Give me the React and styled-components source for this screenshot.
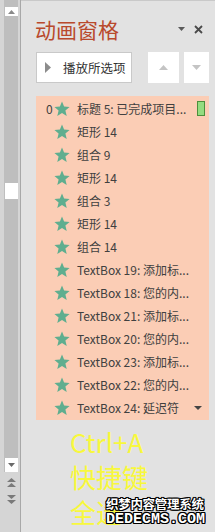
import React from "react";
import styled, { createGlobalStyle } from "styled-components";

const GlobalStyle = createGlobalStyle`
  html, body { margin: 0; padding: 0; }
  body {
    width: 215px; height: 532px; overflow: hidden;
    background: #e1e1e1;
    font-family: "Noto Sans CJK SC", "Noto Sans", sans-serif;
  }
`;

const Frame = styled.div`
  position: relative;
  display: flex;
  width: 215px;
  height: 532px;
  overflow: hidden;
`;

const ScrollCol = styled.div`
  width: 21px;
  box-sizing: border-box;
  border-right: 1px solid #a8a8a8;
  background: #d5d5d5;
  padding-left: 4px;
  display: flex;
  flex-direction: column;
`;

const Track = styled.div`
  width: 14px;
  height: 472px;
  background: #bebebe;
  display: flex;
  flex-direction: column;
  align-items: center;
`;

const ScrollBtn = styled.div`
  width: 13px;
  height: ${p => p.$h}px;
  margin-top: ${p => p.$mt || 0}px;
  background: #ffffff;
  display: flex;
  align-items: center;
  justify-content: center;
`;

const Spacer = styled.div`flex: 1;`;

const PageArrows = styled.div`
  width: 14px;
  display: flex;
  flex-direction: column;
  align-items: center;
  gap: 8px;
  margin-top: 6px;
`;

const Main = styled.div`
  flex: 1;
  box-sizing: border-box;
  border-top: 1px solid #c9c9c9;
  background: #e2e2e2;
  padding-left: 15px;
  display: flex;
  flex-direction: column;
`;

const TitleRow = styled.div`
  height: 30px;
  margin-top: 13px;
  padding-right: 12px;
  display: flex;
  align-items: center;
  justify-content: space-between;
`;

const Title = styled.div`
  font-size: 21px;
  line-height: 1;
  color: #b9492c;
  margin-left: -1px;
`;

const Controls = styled.div`
  display: flex;
  align-items: center;
  gap: 9px;
`;

const ButtonRow = styled.div`
  margin-top: 8px;
  height: 31px;
  display: flex;
`;

const PlayButton = styled.div`
  width: 96px;
  box-sizing: border-box;
  background: #fff;
  border: 1px solid #c9c9c9;
  display: flex;
  align-items: center;
  padding-left: 8px;
  gap: 12px;
  font-size: 12.5px;
  color: #333;
`;

const NavButton = styled.div`
  width: ${p => p.$w}px;
  margin-left: ${p => p.$ml}px;
  background: #fff;
  display: flex;
  align-items: center;
  justify-content: center;
`;

const List = styled.div`
  margin-top: 13px;
  width: 173px;
  background: #fbcdb5;
  padding: 1px 0;
`;

const Row = styled.div`
  height: 23px;
  display: flex;
  align-items: center;
  padding-left: 10px;
  font-size: 12px;
  color: #404040;
`;

const Index = styled.span`
  width: 8px;
  flex: none;
`;

const RowText = styled.span`
  flex: 1;
  margin-left: 7px;
  white-space: nowrap;
`;

const Marker = styled.span`
  width: 6px;
  height: 13px;
  border: 1px solid #4c8f3c;
  background: #94dc80;
  margin-right: 4px;
`;

const DropMark = styled.span`
  margin-right: 7px;
  display: flex;
`;

const Caption = styled.div`
  margin-top: 4px;
  margin-left: 34px;
  font-size: 26px;
  line-height: 35px;
  color: #f8f83c;
`;

const Watermark = styled.div`
  position: absolute;
  left: 106px;
  top: 495px;
  color: #fff;
  text-shadow: 1px 0 #000, -1px 0 #000, 0 1px #000, 0 -1px #000, 1px 1px #000, -1px -1px #000, 1px -1px #000, -1px 1px #000;
`;

const WmCn = styled.div`
  font-size: 12.5px;
  font-weight: bold;
  line-height: 18px;
  letter-spacing: -0.3px;
`;

const WmEn = styled.div`
  font-family: "Liberation Mono", monospace;
  font-size: 15px;
  font-weight: bold;
  line-height: 13px;
`;

const Star = () => (
  <svg width="16" height="16" viewBox="0 0 16 16">
    <polygon
      points="8,0.5 10.1,5.6 15.6,6 11.4,9.6 12.7,15 8,12.1 3.3,15 4.6,9.6 0.4,6 5.9,5.6"
      fill="#5fae8f"
    />
  </svg>
);

const Tri = ({ dir, color, w = 9, h = 5 }) => {
  const pts =
    dir === "up" ? `0,${h} ${w},${h} ${w / 2},0` : `0,0 ${w},0 ${w / 2},${h}`;
  return (
    <svg width={w} height={h} viewBox={`0 0 ${w} ${h}`}>
      <polygon points={pts} fill={color} />
    </svg>
  );
};

const DoubleTri = ({ dir }) => (
  <svg width="9" height="9" viewBox="0 0 9 9">
    {dir === "up" ? (
      <>
        <polygon points="0,4 9,4 4.5,0" fill="#7a7a7a" />
        <polygon points="0,9 9,9 4.5,5" fill="#7a7a7a" />
      </>
    ) : (
      <>
        <polygon points="0,0 9,0 4.5,4" fill="#7a7a7a" />
        <polygon points="0,5 9,5 4.5,9" fill="#7a7a7a" />
      </>
    )}
  </svg>
);

const rows = [
  { idx: "0", text: "标题 5: 已完成项目...", marker: true },
  { text: "矩形 14" },
  { text: "组合 9" },
  { text: "矩形 14" },
  { text: "组合 3" },
  { text: "矩形 14" },
  { text: "组合 14" },
  { text: "TextBox 19: 添加标..." },
  { text: "TextBox 18: 您的内..." },
  { text: "TextBox 21: 添加标..." },
  { text: "TextBox 20: 您的内..." },
  { text: "TextBox 23: 添加标..." },
  { text: "TextBox 22: 您的内..." },
  { text: "TextBox 24: 延迟符", drop: true },
];

export default function App() {
  return (
    <>
      <GlobalStyle />
      <Frame>
        <ScrollCol>
          <Track>
            <ScrollBtn $h={9} $mt={7}>
              <Tri dir="up" color="#8a8a8a" w={7} h={4} />
            </ScrollBtn>
            <ScrollBtn $h={16} $mt={167} />
            <Spacer />
            <ScrollBtn $h={14}>
              <Tri dir="down" color="#6a6a6a" w={7} h={4} />
            </ScrollBtn>
          </Track>
          <PageArrows>
            <DoubleTri dir="up" />
            <DoubleTri dir="down" />
          </PageArrows>
        </ScrollCol>
        <Main>
          <TitleRow>
            <Title>动画窗格</Title>
            <Controls>
              <Tri dir="down" color="#5a5a5a" w={7} h={4} />
              <svg width="9" height="9" viewBox="0 0 9 9">
                <path d="M1 1 L8 8 M8 1 L1 8" stroke="#4a4a4a" strokeWidth="1.8" />
              </svg>
            </Controls>
          </TitleRow>
          <ButtonRow>
            <PlayButton>
              <svg width="6" height="11" viewBox="0 0 6 11">
                <polygon points="0,0 6,5.5 0,11" fill="#8c8c8c" />
              </svg>
              播放所选项
            </PlayButton>
            <NavButton $w={31} $ml={16}>
              <Tri dir="up" color="#c4c4c4" />
            </NavButton>
            <NavButton $w={25} $ml={5}>
              <Tri dir="down" color="#c4c4c4" />
            </NavButton>
          </ButtonRow>
          <List>
            {rows.map((r, i) => (
              <Row key={i}>
                <Index>{r.idx || ""}</Index>
                <Star />
                <RowText>{r.text}</RowText>
                {r.marker && <Marker />}
                {r.drop && (
                  <DropMark>
                    <Tri dir="down" color="#444" w={8} h={4} />
                  </DropMark>
                )}
              </Row>
            ))}
          </List>
          <Caption>
            <div>Ctrl+A</div>
            <div>快捷键</div>
            <div>全选</div>
          </Caption>
        </Main>
        <Watermark>
          <WmCn>织梦内容管理系统</WmCn>
          <WmEn>DEDECMS.COM</WmEn>
        </Watermark>
      </Frame>
    </>
  );
}
